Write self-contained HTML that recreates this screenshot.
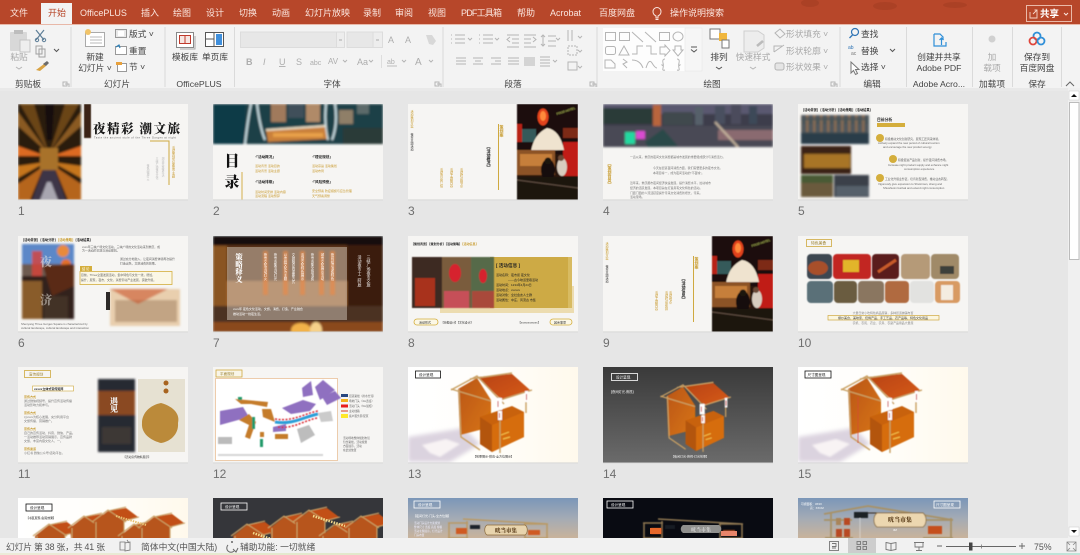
<!DOCTYPE html>
<html lang="zh-CN"><head><meta charset="utf-8"><title>幻灯片浏览</title>
<style>
html,body{margin:0;padding:0;background:#e6e6e6;width:1080px;height:555px;overflow:hidden}
svg{display:block;font-family:"Liberation Sans","Noto Sans CJK SC",sans-serif}
#root{filter:blur(.3px)}
.t{font-size:9px;fill:#fbe6df}
.r{font-size:8.7px;fill:#444}
.c{text-anchor:middle}
.g{fill:#a9a9a9}
.n{font-size:12px;fill:#6f6f6f}
.s{font-size:8.8px;fill:#555}
.ic{fill:none;stroke:#8a8a8a;stroke-width:1}
.ig{fill:none;stroke:#b5b5b5;stroke-width:1}
.v{writing-mode:vertical-rl}
.se{font-family:"Liberation Serif","Noto Serif CJK SC",serif;font-weight:900}
</style></head><body>
<svg id="root" width="1080" height="555" viewBox="0 0 1080 555" xmlns="http://www.w3.org/2000/svg">
<defs>
<filter id="b" x="-5%" y="-5%" width="110%" height="110%"><feGaussianBlur stdDeviation="1"/></filter>
<filter id="b2" x="-5%" y="-5%" width="110%" height="110%"><feGaussianBlur stdDeviation="0.5"/></filter>
<filter id="b3" x="-20%" y="-20%" width="140%" height="140%"><feGaussianBlur stdDeviation="2"/></filter>
<pattern id="lights" width="6" height="5" patternUnits="userSpaceOnUse"><rect width="6" height="5" fill="#5a3516"/><rect x="1" y="1" width="2.4" height="2" fill="#d98a30"/><rect x="4" y="3" width="1.2" height="1.2" fill="#f0bb66"/></pattern>
<pattern id="crowd" width="5" height="4" patternUnits="userSpaceOnUse"><rect width="5" height="4" fill="#6f4a30"/><circle cx="1.5" cy="1.5" r="1.2" fill="#3c2a20"/><circle cx="4" cy="3" r="1" fill="#b98a58"/></pattern>
<pattern id="city" width="7" height="14" patternUnits="userSpaceOnUse"><rect width="7" height="14" fill="#35505f"/><rect x="1" y="2" width="2.5" height="12" fill="#9a7a58"/><rect x="4.5" y="6" width="2" height="8" fill="#44586a"/></pattern>
<linearGradient id="wh" x1="0" x2="1" y1="0" y2="0"><stop offset="0" stop-color="#fff"/><stop offset=".5" stop-color="#fffefa"/><stop offset="1" stop-color="#fff9ec"/></linearGradient>
<linearGradient id="dk" x1="0" x2="0" y1="0" y2="1"><stop offset="0" stop-color="#3a3a3a"/><stop offset="1" stop-color="#6b6b6b"/></linearGradient>
<linearGradient id="sky" x1="0" x2="0" y1="0" y2="1"><stop offset="0" stop-color="#7b97b8"/><stop offset=".5" stop-color="#a3abb5"/><stop offset="1" stop-color="#c9b39b"/></linearGradient>
<linearGradient id="or" x1="0" x2="1" y1="0" y2="1"><stop offset="0" stop-color="#b9541a"/><stop offset="1" stop-color="#d8760f"/></linearGradient>
<linearGradient id="roof" x1="0" x2="1" y1="0" y2="1"><stop offset="0" stop-color="#b8440f"/><stop offset="1" stop-color="#d65a1a"/></linearGradient>
<linearGradient id="gr" x1="0" x2="1"><stop offset="0" stop-color="#ecebd8"/><stop offset=".4" stop-color="#dfe8c8"/><stop offset="1" stop-color="#bfe3d8"/></linearGradient>
<g id="booth">
<polygon points="50,22 69,11 83,33 83,60 52,68" fill="url(#or)"/>
<polygon points="69,10 104,7 122,23 94,33" fill="url(#roof)"/>
<polygon points="72,50 104,39 116,45 116,70 84,85 72,77" fill="#c8620f"/>
<polygon points="72,50 84,58 84,85 72,77" fill="#b35510"/>
<polygon points="84,58 116,45 116,70 84,85" fill="#d66d0f"/>
<path d="M43,23 69,9 96,37M62,12 104,6M92,33 124,23M51,22 53,70 72,83M92,30 92,86M118,25 118,46M43,22 83,34" fill="none" stroke="#c9a064" stroke-width="1.4"/>
<rect x="88" y="31" width="6" height="12" fill="#fff"/><rect x="90" y="44" width="4" height="9" fill="#fff"/><rect x="117" y="24" width="3" height="11" fill="#fff"/>
<path d="M90,34v6M91.5,46v5M118.5,27v6" stroke="#c22" stroke-width="1"/>
<path d="M93,68l8-3M95,72l7-2" stroke="#f1c04a" stroke-width="1.2"/>
</g>
<g id="mini">
<polygon points="2,16 16,5 32,13 32,36 4,36" fill="#b7541a"/>
<polygon points="16,5 34,2 46,11 32,15" fill="#c24f16"/>
<path d="M0,16 16,4 34,16M16,5 34,1M32,15 47,11M4,16 4,42M32,15 32,42" fill="none" stroke="#c9a064" stroke-width="1.1"/>
</g>
<g id="gate">
<path d="M55,21 140,26M40,25H60M40,40H60M41,25V44M59,23V44M116,26H140M116,40H140M117,26V44M139,26V44" fill="none" stroke="#b99a66" stroke-width="1.5"/>
<rect x="62" y="27" width="10" height="4" fill="#1f232b"/>
<rect x="48" y="30" width="11" height="6" fill="#cf5a22"/><rect x="120" y="32" width="12" height="5" fill="#cf5a22"/>
</g>
<g id="lantern">
<rect width="61" height="96" fill="#1a0f0c"/>
<rect x="0" y="50" width="61" height="46" fill="#2a1710"/>
<ellipse cx="26" cy="13" rx="5.5" ry="8.5" fill="#e2421a"/><ellipse cx="26" cy="12" rx="3" ry="5" fill="#ff8a3a"/>
<rect x="0" y="20" width="5" height="18" fill="#b82418"/><rect x="5" y="25" width="14" height="13" fill="#345a5a"/>
<path d="M46,24h15v10H46z" fill="#7d2a18"/>
<rect x="46" y="38" width="15" height="34" fill="#c01f14"/>
<path d="M14,47 Q17,30 30,24 Q43,26 47,46Z" fill="#efe3cf"/>
<rect x="0" y="46" width="38" height="25" fill="#8c5226"/><rect x="3" y="50" width="32" height="12" fill="#c67f3a"/>
<ellipse cx="31" cy="66" rx="7" ry="11" fill="#120b09"/><circle cx="31" cy="57" r="3.5" fill="#1c1310"/>
<ellipse cx="45" cy="63" rx="5" ry="9" fill="#d8cdbf"/><circle cx="44" cy="54" r="3" fill="#6a4a36"/>
<rect x="0" y="73" width="61" height="23" fill="#1f1410"/><path d="M0,76 61,84" stroke="#5a4a3d" stroke-width="1.2"/>
<text x="40" y="11" font-size="3" fill="#d6e86a" transform="rotate(-18 40 11)">FOOD HOTEL</text>
</g>
</defs>
<rect width="1080" height="555" fill="#e6e6e6"/>

<!-- SLIDES -->
<!-- 1 -->
<svg x="18" y="104" width="170" height="96" viewBox="0 0 170 96"><rect width="170" height="96" fill="#f6f5f3"/>
<g filter="url(#b)"><rect width="63" height="96" fill="#2a1a10"/>
<polygon points="31,50 2,0 16,0" fill="#6a4418"/><polygon points="31,50 61,0 47,0" fill="#6a4418"/>
<polygon points="31,50 0,8 0,22" fill="#8a5a20"/><polygon points="31,50 63,8 63,22" fill="#8a5a20"/>
<polygon points="28,52 0,42 0,52" fill="#dd6a20"/><polygon points="34,52 63,42 63,52" fill="#dd6a20"/>
<polygon points="28,58 0,62 0,74" fill="#c6761f"/><polygon points="34,58 63,62 63,74" fill="#c6761f"/>
<polygon points="26,62 0,80 0,96 12,96" fill="#b5651a"/><polygon points="36,62 63,80 63,96 50,96" fill="#b5651a"/>
<polygon points="25,66 37,66 48,96 14,96" fill="#3d3546"/><polygon points="29,78 33,78 40,96 22,96" fill="#a8a6b0"/>
<rect x="22" y="44" width="18" height="22" fill="#a8722c"/>
<polygon points="27,0 36,0 34,36 29,36" fill="#151010"/></g>
<rect x="66" width="7" height="34" fill="#3a2415" filter="url(#b2)"/>
<text x="75" y="29" class="se" font-size="12.5" fill="#181818" textLength="87" lengthAdjust="spacing">夜精彩 潮文旅</text>
<text x="76" y="34.5" font-size="2.7" fill="#666" textLength="82">Taste the ancient style of the Three Gorges at night</text>
<path d="M132,37H151V81" fill="none" stroke="#cfa93f" stroke-width="1"/>
<text x="155" y="42" font-size="3.2" fill="#c99a2e" class="v">活动策划方案夜市主题</text>
<text x="130" y="60" font-size="2.8" fill="#bbb" class="v">夜色阑珊灯火</text><text x="139" y="53" font-size="2.8" fill="#bbb" class="v">三峡广场夜市文化</text><text x="145" y="53" font-size="2.8" fill="#bbb" class="v">潮流文旅夜生活</text>
</svg>
<!-- 2 -->
<svg x="213" y="104" width="170" height="96" viewBox="0 0 170 96"><rect width="170" height="96" fill="#f6f5f3"/>
<g filter="url(#b)"><rect width="170" height="40" fill="#1b3f47"/><rect x="0" width="32" height="40" fill="#0f3a46"/>
<rect x="58" width="15" height="18" fill="#a07a5c"/><rect x="93" width="14" height="18" fill="#b08a68"/><rect x="75" width="16" height="14" fill="#41505a"/><rect x="126" y="6" width="14" height="14" fill="#8f7f68"/><rect x="144" y="0" width="12" height="10" fill="#5b6a6a"/>
<rect x="130" y="24" width="40" height="16" fill="#2a3a38"/>
<path d="M32,40 Q35,14 38,0M44,0 Q47,24 52,36M113,0 Q111,20 115,36M122,0 Q125,20 119,36" stroke="#d7ebf0" stroke-width="1.8" fill="none"/>
<polygon points="53,26 112,22 114,35 55,38" fill="#c9803a"/><polygon points="53,25 112,21 112,23 53,27" fill="#ece0c8"/><rect x="60" y="29" width="50" height="4" fill="#e8a04a"/></g>
<text x="19" y="62" class="se" font-size="15" fill="#111" text-anchor="middle">目</text><text x="19" y="83" class="se" font-size="15" fill="#111" text-anchor="middle">录</text>
<rect x="28.5" y="68" width="1" height="28" fill="#d4ae4b"/>
<g font-size="3.6" fill="#222" font-weight="700"><text x="42" y="54">·「活动概况」</text><text x="99" y="54">·「理论规划」</text><text x="42" y="79">·「活动排期」</text><text x="99" y="79">·「风险预案」</text></g>
<g font-size="3" fill="#c99a2e"><text x="42" y="63">活动背景 活动目的</text><text x="42" y="68">活动背景 活动主题</text><text x="99" y="63">活动宗旨 活动策划</text><text x="99" y="68">活动布局</text><text x="42" y="89">活动时间安排 活动内容</text><text x="42" y="93">活动流程 活动预算</text><text x="99" y="88">安全预案 防疫措施与应急管理</text><text x="99" y="93">天气预案调整</text></g>
</svg>
<!-- 3 -->
<svg x="408" y="104" width="170" height="96" viewBox="0 0 170 96"><rect width="170" height="96" fill="#f6f5f3"/>
<use href="#lantern" x="109" filter="url(#b2)"/>
<rect x="90" y="20" width="1" height="66" fill="#cfa93f"/>
<text x="94" y="21" font-size="4" fill="#c79a2b" class="v" font-weight="700">策划案</text>
<text x="81" y="41" font-size="4" fill="#222" class="v" font-weight="700">【活动概况】</text>
<text x="4" y="6" font-size="3" fill="#c79a2b" class="v">活动策划方案</text><text x="4" y="29" font-size="3" fill="#333" class="v">夜市主题活动</text>
<g font-size="3.2" fill="#c99a2e" class="v"><text x="33" y="64">活动背景介绍</text><text x="43" y="64">活动主题内容</text><text x="53" y="64">活动时间地点</text></g>
</svg>
<!-- 4 -->
<svg x="603" y="104" width="170" height="96" viewBox="0 0 170 96"><rect width="170" height="96" fill="#f6f5f3"/>
<g filter="url(#b)"><rect width="170" height="43" fill="#3c3d4c"/><rect width="170" height="10" fill="#5a5870"/><rect x="0" y="4" width="52" height="16" fill="#2c3a38"/><rect x="50" y="1" width="8" height="21" fill="#b8653c"/><rect x="60" y="8" width="30" height="13" fill="#3f4a4e"/><rect x="92" y="3" width="8" height="18" fill="#56606a"/><rect x="112" y="2" width="10" height="18" fill="#48505e"/><rect x="128" y="0" width="10" height="20" fill="#4c4c5c"/><rect x="146" y="2" width="8" height="18" fill="#3e4a58"/><rect y="22" width="170" height="21" fill="#4a4855"/><rect x="115" y="26" width="55" height="10" fill="#8a6a70"/><rect x="22" y="28" width="10" height="12" fill="#22d8a0"/><rect x="33" y="27" width="9" height="8" fill="#d94cd0"/><polygon points="42,38 60,25 75,42 45,43" fill="#2a4a4a"/><path d="M112,18 135,43" stroke="#c9b8a0" stroke-width="2"/></g>
<text x="7" y="58" font-size="4" fill="#c79a2b" class="v" font-weight="700">【策划背景】</text>
<g font-size="2.9" fill="#777"><text x="27" y="54">一直以来，重庆的夜间文化消费都是城市发展的重要组成部分与消费活力。</text><text x="50" y="65">今天在街道夜间消费方面，我们需要更多的夜市文化。</text><text x="50" y="70">本项目将一，成为夜间活动的"不夜城"。</text><text x="27" y="80">近年来，重庆都市夜间经济快速发展，提升消费水平，拉动城市</text><text x="27" y="85">经济的活跃发展，本项目旨在打造具有文化特色的活动。</text><text x="27" y="90">门面门面的人流活跃度提升带来文化消费新增长，带来。</text><text x="27" y="94">活动现场。</text></g>
</svg>
<!-- 5 -->
<svg x="798" y="104" width="170" height="96" viewBox="0 0 170 96"><rect width="170" height="96" fill="#f6f5f3"/>
<text x="3" y="7" font-size="3.2" fill="#222" font-weight="700">【活动背景】【活动分析】【活动策略】【活动结果】</text>
<g filter="url(#b)"><rect x="3" y="11" width="68" height="18" fill="#6a5a50"/><rect x="3" y="11" width="68" height="18" fill="url(#city)" opacity=".6"/><rect x="3" y="29" width="68" height="11" fill="#2a3d4a"/><rect x="3" y="42" width="50" height="28" fill="#3a2414"/><rect x="6" y="50" width="46" height="14" fill="#a87428"/><rect x="3" y="71" width="32" height="22" fill="#4a5a34"/><rect x="3" y="79" width="32" height="14" fill="#6a5a3c"/><rect x="36" y="71" width="35" height="22" fill="#3b4048"/><rect x="38" y="82" width="33" height="10" fill="#56606a"/></g>
<text x="79" y="17" font-size="3.8" fill="#222" font-weight="700">目前分析</text>
<rect x="79" y="19" width="28" height="4" fill="#d4ae3c"/>
<circle cx="82" cy="34" r="4" fill="#d4ae3c"/><circle cx="95" cy="55" r="4" fill="#d4ae3c"/><circle cx="82" cy="74" r="4" fill="#d4ae3c"/>
<g font-size="2.8" fill="#666"><text x="87" y="36">积极推动文化创新研究，展现工匠风采体验。</text><text x="80" y="40">Actively expand the new period of cultural tourism</text><text x="85" y="44">and encourage the new product energy</text><text x="100" y="57">积极促进产品创新，提升夜间消费市场。</text><text x="90" y="62">Increase night product supply and enhance night</text><text x="106" y="66">consumption experience</text><text x="87" y="76">工业化升级业务链，培育新型消费，推动业态转型。</text><text x="80" y="81">Vigorously give expansion to Shuiximan, sheng and</text><text x="85" y="85">Shiushusin festival and extend night consumption</text></g>
</svg>
<!-- 6 -->
<svg x="18" y="236" width="170" height="96" viewBox="0 0 170 96"><rect width="170" height="96" fill="#f6f5f3"/>
<text x="3" y="5" font-size="3.2" fill="#222" font-weight="700">【活动背景】【活动分析】<tspan fill="#c79a2b">【活动策略】</tspan>【活动结果】</text>
<g filter="url(#b)"><rect x="4" y="8" width="52" height="75" fill="#6d5a50"/><rect x="4" y="8" width="52" height="20" fill="#5b88c8"/><rect x="4" y="40" width="52" height="43" fill="#30241f"/><circle cx="45" cy="15" r="6" fill="#e98a3a"/><circle cx="48" cy="28" r="5" fill="#e2702a"/><rect x="14" y="15" width="10" height="25" fill="#d9423a" opacity=".8"/><rect x="4" y="45" width="20" height="38" fill="#a06a30" opacity=".8"/><polygon points="25,30 56,28 56,50 34,60" fill="#5a2a18"/><rect x="26" y="60" width="24" height="23" fill="#433028"/>
<rect x="92" y="53" width="70" height="37" fill="#e9cfae"/><rect x="97" y="64" width="62" height="22" fill="#c2a484"/><polygon points="92,53 150,53 120,68" fill="#c84a20" opacity=".55"/></g>
<text x="22" y="30" font-size="12" fill="#f5f1ea" opacity=".5" class="se">夜</text><text x="22" y="68" font-size="12" fill="#e8e4de" opacity=".5" class="se">济</text>
<g font-size="2.9" fill="#666"><text x="64" y="12">xxxx年三峡广场文化活动，三峡广场的文化活动来到重庆，成</text><text x="64" y="15.5">为一活动的主题与活动规划。</text><text x="102" y="24">通过充分地融入，让夜间消费体验再次提升</text><text x="102" y="28.5">打造出色，文旅消费的效果。</text></g>
<rect x="62" y="30" width="12" height="5" fill="#d4ae3c"/><text x="64" y="34" font-size="3.2" fill="#fff">结 论</text>
<rect x="62" y="35.5" width="92" height="13" fill="#fbf7e6" stroke="#d4ae3c" stroke-width=".8"/>
<g font-size="2.9" fill="#666"><text x="63" y="40">目前，Three全面发展活动，集中特色与文化一线，增加，</text><text x="63" y="45">提升，展现，夜市，文化，消费带动产业发展，突破升级。</text><text x="3" y="89">Shenyang Three Gorges Square is characterized by</text><text x="3" y="93">cultural landscape, cultural landscape and interaction</text></g>
<rect x="88" y="56" width="4" height="18" fill="#2d2a28"/>
</svg>
<!-- 7 -->
<svg x="213" y="236" width="170" height="96" viewBox="0 0 170 96">
<g filter="url(#b)"><rect width="170" height="96" fill="#5a3016"/><rect width="170" height="9" fill="#120d0a"/><rect x="0" y="10" width="14" height="86" fill="#8a5420"/><rect x="134" y="9" width="36" height="70" fill="#3a1d10"/><rect x="14" y="45" width="120" height="30" fill="#a86a34"/><rect y="70" x="0" width="170" height="18" fill="#4c3324"/><rect y="86" width="170" height="10" fill="#8a4a1c"/><ellipse cx="88" cy="94" rx="10" ry="7" fill="#f2b24a"/><ellipse cx="103" cy="94" rx="6" ry="8" fill="#f6d18a"/></g>
<rect x="14" y="11" width="120" height="73" fill="#c8bcae" opacity=".55"/>
<g filter="url(#b)" opacity=".7"><rect x="50" y="15" width="5" height="44" fill="#e88a4a"/><rect x="70" y="15" width="5" height="44" fill="#e88a4a"/><rect x="87" y="15" width="5" height="44" fill="#e88a4a"/><rect x="106" y="15" width="5" height="44" fill="#e88a4a"/><rect x="117" y="15" width="5" height="44" fill="#e88a4a"/></g>
<g fill="#fff"><text x="26" y="17" font-size="7.5" class="se v">策略释义</text>
<g font-size="3.400" class="v" opacity=".95"><text x="52" y="17">夜市文化活动灯火</text><text x="62" y="17">夜市市集活动灯光</text><text x="72" y="17">以传统文化为主题</text><text x="80" y="17">文旅融合的重要方式</text><text x="89" y="17">活动文化特色展示</text><text x="99" y="17">夜市市集文旅消费</text><text x="109" y="17">城市文化展示活动</text><text x="119" y="17">夜间经济消费特色</text><text x="147" y="19" font-size="4">活动夜市十二时辰</text><text x="156" y="19" font-size="4">三峡广场夜市文旅</text></g>
<text x="20" y="74" font-size="3">xxxx年 夜色文化活动，文旅，消费，打造，产业融合</text><text x="20" y="79" font-size="3">推动活动一线夜生活。</text></g>
</svg>
<!-- 8 -->
<svg x="408" y="236" width="170" height="96" viewBox="0 0 170 96"><rect width="170" height="96" fill="#f6f5f3"/>
<text x="3" y="9" font-size="3" fill="#222" font-weight="700">【策划背景】【策划分析】【活动策略】<tspan fill="#c79a2b">【活动信息】</tspan></text>
<rect x="32" y="50" width="134" height="27" fill="#ecdcb0"/>
<rect x="82" y="21" width="80" height="51" fill="#cdaa45"/><rect x="160" y="21" width="4" height="51" fill="#d8bb62"/>
<g filter="url(#b2)"><rect x="4" y="21" width="82" height="51" fill="#4a3528"/><rect x="4" y="21" width="30" height="51" fill="#3e2b24"/><rect x="7" y="42" width="20" height="28" fill="#a8331f"/><rect x="34" y="21" width="29" height="51" fill="#7a5c3c"/><ellipse cx="47" cy="37" rx="6" ry="9" fill="#d6232e"/><rect x="36" y="55" width="25" height="17" fill="#c64f58"/><rect x="63" y="21" width="23" height="51" fill="#566a48"/><ellipse cx="75" cy="40" rx="4" ry="7" fill="#d6232e"/><rect x="64" y="55" width="22" height="17" fill="#a94a3a"/></g>
<text x="88" y="31" font-size="4.6" fill="#222" font-weight="700">[ 活动信息 ]</text>
<g font-size="3" fill="#222"><text x="88" y="40">活动名称：夜市街 夜文化</text><text x="100" y="45">——古今味道里巷活动</text><text x="88" y="50">活动时间：1234年4月24日</text><text x="88" y="55">活动地点：xxxxxx</text><text x="88" y="60">活动对象：全社会友人士群</text><text x="88" y="65">活动属性：中庄、风流古 市集</text></g>
<rect x="6" y="83" width="24" height="6" rx="3" fill="#fbf7e6" stroke="#d4ae3c" stroke-width=".8"/><text x="11" y="87.5" font-size="3" fill="#333">活动形式</text>
<text x="33" y="87.5" font-size="2.8" fill="#333">【海报设计】【文化设计】</text><text x="110" y="87.5" font-size="2.8" fill="#333">【xxxxxxxxxxxx】</text>
<rect x="142" y="83" width="22" height="6" rx="3" fill="#fbf7e6" stroke="#d4ae3c" stroke-width=".8"/><text x="146" y="87.5" font-size="3" fill="#333">其余事项</text>
</svg>
<!-- 9 -->
<svg x="603" y="236" width="170" height="96" viewBox="0 0 170 96"><rect width="170" height="96" fill="#f6f5f3"/>
<use href="#lantern" x="109" filter="url(#b2)"/>
<rect x="90" y="20" width="1" height="66" fill="#cfa93f"/>
<text x="94" y="21" font-size="4" fill="#c79a2b" class="v" font-weight="700">策划案</text>
<text x="81" y="41" font-size="4" fill="#222" class="v" font-weight="700">【活动信息】</text>
<text x="4" y="6" font-size="3" fill="#c79a2b" class="v">活动策划方案</text><text x="4" y="29" font-size="3" fill="#333" class="v">夜市主题活动</text>
<g font-size="3.2" fill="#c99a2e" class="v"><text x="53" y="55">活动主题内容</text><text x="63" y="55">活动时间安排</text><text x="67" y="55">活动地点</text></g>
</svg>
<!-- 10 -->
<svg x="798" y="236" width="170" height="96" viewBox="0 0 170 96"><rect width="170" height="96" fill="#f6f5f3"/>
<rect x="8.500" y="3.500" width="25" height="7" fill="none" stroke="#cfa93f" stroke-width=".8"/><text x="13" y="8.500" font-size="3.800" fill="#9a8030">特色美食</text>
<g filter="url(#b2)"><rect x="9" y="18" width="25" height="25" rx="4" fill="#3d4651"/><ellipse cx="20" cy="32" rx="10" ry="7" fill="#a8502a"/><rect x="35" y="18" width="38" height="25" rx="4" fill="#c22522"/><rect x="45" y="24" width="16" height="12" fill="#e2b52a"/><rect x="74" y="18" width="27" height="25" rx="4" fill="#5a1f1c"/><path d="M80,36 98,24" stroke="#c85a2a" stroke-width="3"/><rect x="103" y="18" width="29" height="25" rx="4" fill="#b59a78"/><rect x="133" y="18" width="28" height="25" rx="4" fill="#a08a68"/><rect x="142" y="30" width="14" height="8" fill="#3c3f3a"/>
<rect x="9" y="45" width="26" height="22" rx="4" fill="#5a7078"/><rect x="36" y="45" width="23" height="22" rx="4" fill="#6a5c40"/><rect x="60" y="45" width="26" height="22" rx="4" fill="#8a7660"/><rect x="87" y="45" width="24" height="22" rx="4" fill="#b06a40"/><rect x="112" y="45" width="24" height="22" rx="4" fill="#e2e2e0"/><rect x="137" y="45" width="25" height="22" rx="4" fill="#d89a62"/><rect x="143" y="49" width="12" height="15" fill="#f4ece0"/></g>
<text x="85" y="78" font-size="2.900" fill="#888" text-anchor="middle">大量日常小吃特色商品展销，多种街道摊铺布置</text>
<rect x="30" y="79.500" width="111" height="4.500" fill="#fbf6df" stroke="#cfa93f" stroke-width=".7"/>
<text x="85" y="83" font-size="3" fill="#444" text-anchor="middle">爆炒美食、美味家、烧烤产品、手工艺品、农产品等、特色文化用品</text>
<text x="85" y="88" font-size="2.900" fill="#888" text-anchor="middle">农机、农民、农业、农具、农副产品用品大量展</text>
</svg>
<!-- 11 -->
<svg x="18" y="367" width="170" height="96" viewBox="0 0 170 96"><rect width="170" height="96" fill="#f6f5f3"/>
<rect x="6.500" y="3.500" width="26" height="7" fill="none" stroke="#cfa93f" stroke-width=".8"/><text x="11" y="8.500" font-size="3.600" fill="#9a8030">宣传规划</text>
<rect x="14.500" y="19" width="41" height="5" fill="#fff" stroke="#cfa93f" stroke-width=".6"/><text x="16" y="23" font-size="3" fill="#222" font-weight="700">xxxxx立体式宣传矩阵</text>
<g font-size="3" fill="#777"><text x="6" y="31" fill="#c79a2b" font-weight="700">宣传方式</text><text x="6" y="35">通过微信视频号，提升宣传活动传播</text><text x="6" y="39">活动影响力和参与。</text>
<text x="6" y="47" fill="#c79a2b" font-weight="700">宣传方式</text><text x="6" y="51">以xxxx为核心发展，充分利用平台</text><text x="6" y="55">文旅传播、营销推广。</text>
<text x="6" y="63" fill="#c79a2b" font-weight="700">宣传方式</text><text x="6" y="67">自己的宣传活动，抖音、微信、产品。</text><text x="6" y="71">一活动推荐活动营销展示，宣传品牌</text><text x="6" y="75">文旅，丰富内容文化人，一。</text>
<text x="6" y="83" fill="#c79a2b" font-weight="700">宣传渠道</text><text x="6" y="87">小红书 微信公众号/活动平台。</text></g>
<g filter="url(#b)"><rect x="80" y="12" width="37" height="73" fill="#272c30"/><rect x="80" y="24" width="37" height="24" fill="#8a4a24"/><rect x="84" y="60" width="29" height="17" fill="#3e3835"/></g>
<text x="96" y="30" font-size="8" fill="#eee" class="se v">遇见</text>
<rect x="120" y="12" width="47" height="73" fill="#e6e1d2"/><path d="M143,36 c14,4 19,12 17,20 c1,12-9,19-17,20 c-8,-2-20,-8-19,-20 c0,-10 8,-18 19,-20z" fill="#bb8a3a"/><circle cx="148" cy="16" r="2.500" fill="#a8641f"/><circle cx="148" cy="24" r="2.500" fill="#a8641f"/>
<text x="105" y="91" font-size="2.800" fill="#333">【活动宣传物料展示】</text>
</svg>
<!-- 12 -->
<svg x="213" y="367" width="170" height="96" viewBox="0 0 170 96"><rect width="170" height="96" fill="#f6f5f3"/>
<rect x="2.500" y="11.500" width="122" height="82" fill="#fff" stroke="#ecc7a4" stroke-width=".9"/>
<rect x="3" y="3" width="26" height="7" fill="#f8f5e8" stroke="#cfa93f" stroke-width=".8"/><text x="7" y="8" font-size="3.600" fill="#9a8030">平面规划</text>
<g filter="url(#b2)"><polygon points="89,21 98,14 100,28 90,30" fill="#8f6fc0"/><polygon points="102,20 110,13 122,23 107,33" fill="#8f6fc0"/><polygon points="109,30 122,24 128,31 114,38" fill="#8f6fc0"/><polygon points="69,41 90,33 103,37 97,44 78,47" fill="#8f6fc0"/><polygon points="7,44 30,40 36,50 7,58" fill="#8f6fc0"/><polygon points="60,60 73,57 73,64 60,65" fill="#8f6fc0"/>
<polygon points="22,32 55,35 54,40 38,37 28,37" fill="#c57b2c"/><polygon points="26,53 36,47 43,55 37,72 32,70 36,58" fill="#c57b2c"/><polygon points="49,42 58,42 62,55 50,50" fill="#c57b2c"/><rect x="62" y="67" width="13" height="5" fill="#c57b2c"/><rect x="47" y="65" width="4" height="5" fill="#c57b2c"/>
<path d="M62,55 C80,58 90,50 105,47" stroke="#2a9fd8" stroke-width="3" fill="none"/><path d="M62,52 C80,55 90,47 105,44M65,60 C80,62 90,54 104,51" stroke="#d8202a" stroke-width="1.500" fill="none" stroke-dasharray="2 1.500"/>
<polygon points="105,46 118,44 120,54 108,55" fill="#cbcbcb"/><polygon points="84,62 96,58 102,68 88,76" fill="#bdbdbd"/><rect x="5" y="70" width="14" height="7" fill="#bbb"/><path d="M5,88 H110" stroke="#d5d5d5" stroke-width="2"/>
<rect x="39" y="50" width="3" height="12" fill="#239a6a"/><rect x="47" y="72" width="3" height="8" fill="#239a6a"/><rect x="25" y="30" width="4" height="3" fill="#239a6a"/></g>
<rect x="128" y="27" width="7" height="3" fill="#27467f"/><rect x="128" y="32" width="7" height="3" fill="#f2b01e"/><rect x="128" y="37.500" width="7" height="3" fill="#e81d1d"/><path d="M128,44h7" stroke="#d83a1d"/><rect x="128" y="47" width="7" height="4" fill="#ffe82a"/>
<g font-size="2.700" fill="#666"><text x="136" y="30">街道路线（用水分流）</text><text x="136" y="35">场地门头（3m宽度）</text><text x="136" y="40">活动门头（5m展柜）</text><text x="136" y="45">主动线路</text><text x="136" y="50">客户服务区/配区</text><text x="130" y="72">活动场地整体规划布局</text><text x="130" y="76">包含路线，活动规划</text><text x="130" y="80">方面展示，活动</text><text x="130" y="84">在此处放置</text></g>
</svg>
<!-- 13 -->
<svg x="408" y="367" width="170" height="96" viewBox="0 0 170 96"><rect width="170" height="96" fill="url(#wh)"/>
<polygon points="0,70 56,61 72,77 42,95 0,95" fill="#dbd3df" filter="url(#b3)"/><polygon points="14,78 38,72 52,77 32,90 22,86" fill="#f8f3f4" filter="url(#b)"/>
<use href="#booth" filter="url(#b2)"/>
<rect x="7.500" y="4" width="25" height="7" fill="#fff" stroke="#111" stroke-width=".8"/><text x="11" y="9" font-size="3.600" fill="#111">设计呈现</text>
<text x="65" y="90.500" font-size="3" fill="#333">【效果展示-横向-全方位展示】</text>
</svg>
<!-- 14 -->
<svg x="603" y="367" width="170" height="96" viewBox="0 0 170 96"><rect width="170" height="96" fill="url(#dk)"/>
<g transform="translate(20,10) scale(.87)" filter="url(#b2)"><use href="#booth"/></g>
<rect x="8.500" y="6.500" width="26" height="7" fill="none" stroke="#fff" stroke-width=".8"/><text x="13" y="11.500" font-size="3.600" fill="#fff">设计呈现</text>
<text x="6" y="26" font-size="3.200" fill="#eee">【夜间灯光-俯视】</text>
<text x="68" y="90.500" font-size="3" fill="#eee">【夜间灯光-俯视-灯光效果】</text>
</svg>
<!-- 15 -->
<svg x="798" y="367" width="170" height="96" viewBox="0 0 170 96"><rect width="170" height="96" fill="url(#wh)"/>
<polygon points="0,70 56,61 72,77 42,95 0,95" fill="#dbd3df" filter="url(#b3)"/><polygon points="14,78 38,72 52,77 32,90 22,86" fill="#f8f3f4" filter="url(#b)"/>
<use href="#booth" filter="url(#b2)"/><path d="M60,30V76" stroke="#d8453a" stroke-width=".6"/>
<rect x="7" y="4" width="26" height="7" fill="#fff" stroke="#111" stroke-width=".8"/><text x="9.500" y="9" font-size="3.600" fill="#111">尺寸图呈现</text>
</svg>
<!-- 16 -->
<svg x="18" y="498" width="170" height="40" viewBox="0 0 170 40"><rect width="170" height="40" fill="url(#wh)"/>
<g filter="url(#b2)"><use href="#mini" x="15" y="22"/><use href="#mini" x="50" y="14"/><use href="#mini" x="74" y="8"/><use href="#mini" x="100" y="22"/><use href="#mini" x="120" y="14"/></g>
<path d="M98,18 128,27" stroke="#e8c070" stroke-width="2" stroke-dasharray="1.500 1"/>
<rect x="8" y="6" width="26" height="7" fill="#fff" stroke="#111" stroke-width=".8"/><text x="12" y="11" font-size="3.600" fill="#111">设计呈现</text>
<text x="8" y="21" font-size="2.900" fill="#222">【书区展现-鱼尾效果】</text>
</svg>
<!-- 17 -->
<svg x="213" y="498" width="170" height="40" viewBox="0 0 170 40"><rect width="170" height="40" fill="#35363a"/>
<g filter="url(#b2)"><use href="#mini" x="18" y="22"/><use href="#mini" x="55" y="14"/><use href="#mini" x="80" y="8"/><use href="#mini" x="106" y="22"/><use href="#mini" x="132" y="14"/></g>
<path d="M100,18 132,28M40,35 70,45" stroke="#f3d88a" stroke-width="2.500" stroke-dasharray="1.500 1.200"/>
<rect x="8" y="5" width="26" height="7" fill="none" stroke="#fff" stroke-width=".8"/><text x="12" y="10" font-size="3.600" fill="#fff">设计呈现</text>
</svg>
<!-- 18 -->
<svg x="408" y="498" width="170" height="40" viewBox="0 0 170 40"><rect width="170" height="40" fill="url(#sky)"/>
<rect x="6" y="3" width="26" height="7" fill="none" stroke="#fff" stroke-width=".8"/><text x="10" y="8" font-size="3.600" fill="#fff">设计呈现</text>
<text x="5" y="19" font-size="3" fill="#fff">【夜间灯光-门头-全方位展】</text>
<g font-size="2.600" fill="#eef"><text x="6" y="26">活动门头设计方案规划</text><text x="6" y="30">整体尺寸 宽度 高度 规格</text><text x="6" y="34">活动主题展示，灯光设计</text><text x="6" y="38">门头布置</text></g>
<use href="#gate" filter="url(#b2)"/>
<path d="M79,27h38c3,2,3,8,0,10h-38c-3,-2,-3,-8,0,-10z" fill="#e8d4ad" stroke="#8a6a3a" stroke-width=".7"/>
<text x="98" y="34.500" class="se" font-size="5.500" fill="#5a3d1a" text-anchor="middle">咣当市集</text>
</svg>
<!-- 19 -->
<svg x="603" y="498" width="170" height="40" viewBox="0 0 170 40"><rect width="170" height="40" fill="#090b12"/>
<rect x="4" y="3" width="26" height="7" fill="none" stroke="#fff" stroke-width=".8"/><text x="8" y="8" font-size="3.600" fill="#fff">设计呈现</text>
<g opacity=".75"><use href="#gate" filter="url(#b2)"/></g>
<rect x="47" y="30" width="11" height="6" fill="#e8682a"/><rect x="118" y="33" width="16" height="5" fill="#e8856a"/>
<path d="M80,27h36c3,2,3,6,0,8h-36c-3,-2,-3,-6,0,-8z" fill="#8f8f8d"/>
<text x="98" y="33.500" class="se" font-size="5" fill="#ccc" text-anchor="middle">咣当市集</text>
</svg>
<!-- 20 -->
<svg x="798" y="498" width="170" height="40" viewBox="0 0 170 40"><rect width="170" height="40" fill="url(#sky)"/>
<text x="3" y="7" font-size="2.800" fill="#fff">可视面积：3X3X</text><text x="12" y="11" font-size="2.800" fill="#fff">高：XXCM</text>
<rect x="136" y="3" width="26" height="7" fill="none" stroke="#fff" stroke-width=".8"/><text x="138" y="8" font-size="3.600" fill="#fff">尺寸图呈现</text>
<g filter="url(#b2)"><path d="M26,16 70,8 155,22M33,15V44M153,20V44M27,40H55M125,40H155M26,22H54M125,22H155" fill="none" stroke="#a89268" stroke-width="1.800"/><path d="M60,15H125" stroke="#332a20" stroke-width="1"/><rect x="56" y="14" width="14" height="6" fill="#1c2028"/><path d="M79,15h46c4,3,4,11,0,14h-46c-4-3-4-11,0-14z" fill="#ecd7b0" stroke="#8a6a3a" stroke-width=".8"/><rect x="38" y="20" width="5" height="7" fill="#a9855a"/><rect x="46" y="20" width="6" height="7" fill="#b84a22"/><rect x="38" y="31" width="6" height="8" fill="#b84a22"/><rect x="46" y="31" width="6" height="8" fill="#b84a22"/><rect x="130" y="28" width="14" height="8" fill="#c54f1f"/><path d="M62,20V44" stroke="#eee" stroke-width=".5"/></g>
<text x="102" y="24" class="se" font-size="6" fill="#5a3d1a" text-anchor="middle">咣当市集</text>
<text x="95" y="33" font-size="2.800" fill="#fff">3M</text>
</svg>
<g fill="#d2d2d2"><rect x="18" y="199.500" width="170" height=".8"/><rect x="213" y="199.500" width="170" height=".8"/><rect x="408" y="199.500" width="170" height=".8"/><rect x="603" y="199.500" width="170" height=".8"/><rect x="798" y="199.500" width="170" height=".8"/><rect x="18" y="331.500" width="170" height=".8"/><rect x="213" y="331.500" width="170" height=".8"/><rect x="408" y="331.500" width="170" height=".8"/><rect x="603" y="331.500" width="170" height=".8"/><rect x="798" y="331.500" width="170" height=".8"/><rect x="18" y="462.500" width="170" height=".8"/><rect x="213" y="462.500" width="170" height=".8"/><rect x="408" y="462.500" width="170" height=".8"/><rect x="603" y="462.500" width="170" height=".8"/><rect x="798" y="462.500" width="170" height=".8"/></g>
<!-- numbers -->
<g class="n"><text x="18" y="215">1</text><text x="213" y="215">2</text><text x="408" y="215">3</text><text x="603" y="215">4</text><text x="798" y="215">5</text>
<text x="18" y="347">6</text><text x="213" y="347">7</text><text x="408" y="347">8</text><text x="603" y="347">9</text><text x="798" y="347">10</text>
<text x="18" y="478">11</text><text x="213" y="478">12</text><text x="408" y="478">13</text><text x="603" y="478">14</text><text x="798" y="478">15</text></g>

<!-- scrollbar -->
<rect x="1068" y="88" width="12" height="450" fill="#f0f0f0"/>
<rect x="1069" y="91" width="10" height="9" fill="#fff" stroke="#c8c8c8" stroke-width=".5"/><path d="M1071,97h6l-3,-3z" fill="#111"/>
<rect x="1069.500" y="102.500" width="9.500" height="157" fill="#fff" stroke="#bcbcbc"/>
<rect x="1069" y="527" width="10" height="9" fill="#fff" stroke="#c8c8c8" stroke-width=".5"/><path d="M1071,530h6l-3,3z" fill="#111"/>

<!-- TITLE BAR -->
<rect width="1080" height="24" fill="#b7472a"/>
<rect y="24" width="1080" height="1" fill="#e8b8a8"/>
<g fill="#a73f24" opacity=".7"><ellipse cx="810" cy="3" rx="9" ry="4"/><ellipse cx="885" cy="6" rx="12" ry="4"/><ellipse cx="955" cy="5" rx="12" ry="3"/></g>
<path d="M41,24V3H72V24Z" fill="#f3f3f3"/>
<g class="t"><text x="10" y="16">文件</text><text x="48" y="16" style="fill:#b7472a">开始</text><text x="80" y="16">OfficePLUS</text><text x="141" y="16">插入</text><text x="173" y="16">绘图</text><text x="206" y="16">设计</text><text x="239" y="16">切换</text><text x="272" y="16">动画</text><text x="305" y="16">幻灯片放映</text><text x="363" y="16">录制</text><text x="395" y="16">审阅</text><text x="428" y="16">视图</text><text x="461" y="16" textLength="41">PDF工具箱</text><text x="517" y="16">帮助</text><text x="550" y="16">Acrobat</text><text x="599" y="16">百度网盘</text><text x="670" y="16">操作说明搜索</text></g>
<path d="M656,18v-2c-2,-1 -3,-3 -3,-4.500a4,4 0 0 1 8,0c0,1.500 -1,3.500 -3,4.500v2zM655.500,19.500h3" fill="none" stroke="#fbe6df"/>
<rect x="1026.500" y="5.500" width="45" height="16" fill="none" stroke="#eab9a8"/>
<path d="M1030,12v6h7v-6M1033,14l4,-4m-2.500,0h2.500v2.500" fill="none" stroke="#f6d5c8" stroke-width=".9"/>
<text x="1040" y="17" font-size="9.500" font-weight="700" fill="#fff">共享</text><path d="M1064,13l2,2 2,-2" fill="none" stroke="#fbe6df"/>

<!-- RIBBON -->
<rect y="25" width="1080" height="63" fill="#f3f3f3"/>
<rect y="88" width="1068" height="3" fill="#e9e9e9"/>
<g fill="#dadada"><rect x="70.500" y="27" width="1" height="60"/><rect x="164.500" y="27" width="1" height="60"/><rect x="234" y="27" width="1" height="60"/><rect x="442.500" y="27" width="1" height="60"/><rect x="596.500" y="27" width="1" height="60"/><rect x="839.500" y="27" width="1" height="60"/><rect x="906" y="27" width="1" height="60"/><rect x="972" y="27" width="1" height="60"/><rect x="1012" y="27" width="1" height="60"/><rect x="1061" y="27" width="1" height="60"/></g>
<!-- labels -->
<g class="r c"><text x="28" y="87">剪贴板</text><text x="117" y="87">幻灯片</text><text x="199" y="87">OfficePLUS</text><text x="332" y="87">字体</text><text x="513" y="87">段落</text><text x="712" y="87">绘图</text><text x="872" y="87">编辑</text><text x="939" y="87">Adobe Acro...</text><text x="992" y="87">加载项</text><text x="1037" y="87">保存</text></g>
<g class="ig"><path d="M63,82h4v4h-4zM65,84h4v3"/><path d="M435,82h4v4h-4zM437,84h4v3"/><path d="M590,82h4v4h-4zM592,84h4v3"/><path d="M831,82h4v4h-4zM833,84h4v3"/></g>
<path d="M1066,86l4,-4 4,4" fill="none" stroke="#666"/>
<!-- clipboard -->
<rect x="10" y="32" width="17" height="19" rx="1" fill="#d8d8d8"/><rect x="14" y="30" width="9" height="4" fill="#bdbdbd"/><rect x="20" y="40" width="10" height="12" fill="#eee" stroke="#c4c4c4"/>
<text x="19" y="60" class="r c" style="fill:#a9a9a9">粘贴</text><path d="M16,67l3,2 3,-2" class="ig"/>
<path d="M36,30l8,10M44,30l-8,10" stroke="#5f7f98" stroke-width="1.200"/><circle cx="37" cy="40" r="1.700" fill="none" stroke="#5f7f98"/><circle cx="44" cy="40" r="1.700" fill="none" stroke="#5f7f98"/>
<path d="M36,46h6v8h-6zM39,49h6v8h-6z" fill="#f3f3f3" stroke="#a0a0a0"/><path d="M54,49l2.500,2.500 2.500,-2.500" fill="none" stroke="#555"/>
<path d="M36,70l8,-6 2,2 -6,5z" fill="#d9a344"/><path d="M43,64l4,-3 2,2 -3,3z" fill="#6b6b6b"/>
<!-- new slide -->
<rect x="85.500" y="32.500" width="19" height="14" fill="#fff" stroke="#aaa"/><path d="M90,37h12M90,40h12M90,43h12" stroke="#b8b8b8"/><circle cx="88" cy="32" r="3" fill="#f1c469"/>
<text x="95" y="60" class="r c">新建</text><text x="95" y="71" class="r c">幻灯片 ˅</text>
<rect x="115.500" y="29.500" width="11" height="8" fill="#e8e8e8" stroke="#999"/><rect x="118" y="31" width="6" height="5" fill="#fff"/><text x="129" y="37" class="r">版式 ˅</text>
<rect x="115.500" y="46.500" width="11" height="8" fill="#fff" stroke="#999"/><path d="M116,47l3,-2 1,3" stroke="#2d7fb6" fill="none" stroke-width="1.200"/><text x="129" y="54" class="r">重置</text>
<rect x="117.500" y="63.500" width="9" height="8" fill="#fff" stroke="#999"/><rect x="116" y="62" width="6" height="3" fill="#e8a13c"/><text x="129" y="70" class="r">节 ˅</text>
<!-- OfficePLUS -->
<rect x="176.500" y="32.500" width="17" height="15" fill="#fff" stroke="#888"/><rect x="179.500" y="35.500" width="11" height="8" fill="#f6e6e2" stroke="#c0392b"/><path d="M185,35v8" stroke="#c0392b"/><path d="M195,36v13h-15" fill="none" stroke="#aaa"/>
<text x="185" y="60" class="r c">模板库</text>
<rect x="205.500" y="32.500" width="18" height="14" fill="#fff" stroke="#555"/><rect x="216" y="34" width="6" height="11" fill="#3f8fdc"/><path d="M214,33v13M206,39h8" stroke="#555"/>
<text x="215" y="60" class="r c">单页库</text>
<!-- font -->
<rect x="240.500" y="32" width="96" height="15.500" fill="#e7e7e7" stroke="#dcdcdc"/><rect x="336.500" y="32" width="8" height="15.500" fill="#ededed" stroke="#dcdcdc"/><path d="M339,40h3" stroke="#aaa"/>
<rect x="347" y="32" width="26" height="15.500" fill="#e7e7e7" stroke="#dcdcdc"/><rect x="373" y="32" width="9.500" height="15.500" fill="#ededed" stroke="#dcdcdc"/><path d="M376,40h3" stroke="#aaa"/>
<g font-size="9" fill="#adadad"><text x="388" y="43">A</text><text x="405" y="43">A</text><text x="246" y="65" font-weight="700">B</text><text x="263" y="65" font-style="italic">I</text><text x="279" y="65" text-decoration="underline">U</text><text x="296" y="65">S</text><text x="310" y="65" font-size="7">abc</text><text x="328" y="64" font-size="8">AV</text><text x="357" y="65">Aa</text><text x="415" y="65" font-size="10">A</text></g>
<path d="M343,60l2,2 2,-2M369,60l2,2 2,-2M402,60l2,2 2,-2M429,60l2,2 2,-2" class="ig"/>
<path d="M381.500,55v13" stroke="#ddd"/>
<text x="387" y="64" font-size="7" fill="#b0b0b0">ab</text><rect x="387" y="65" width="10" height="2" fill="#d8d8d8"/>
<path d="M426,35l6,0 4,6 -3,4 -4,-1z" fill="#d8d8d8"/>
<!-- paragraph -->
<g class="ig"><path d="M451,35h1M451,39h1M451,43h1M455,35h10M455,39h10M455,43h10M468,38l2,2 2,-2"/>
<path d="M479,35h1M479,39h1M479,43h1M483,35h10M483,39h10M483,43h10M495,38l2,2 2,-2"/>
<path d="M507,35h12M512,39h7M512,43h7M507,47h12M510,37l-3,2.500 3,2.500"/>
<path d="M524,35h12M524,39h7M524,43h7M524,47h12M533,37l3,2.500 -3,2.500"/>
<path d="M543,35v11M541,37l2,-2 2,2M541,44l2,2 2,-2M548,36h8M548,41h8M548,46h8M556,38l2,2 2,-2"/>
<path d="M456,58h10M456,61h10M456,64h10"/><path d="M473,58h10M475,61h6M473,64h10"/><path d="M491,58h10M495,61h6M491,64h10"/><path d="M508,58h11M508,61h11M508,64h11"/>
<path d="M540,57h10M540,60h10M540,63h10M540,66h10M553,60l2,2 2,-2"/>
<path d="M578,36l2,2 2,-2M578,50l2,2 2,-2M578,66l2,2 2,-2"/></g>
<rect x="524" y="57" width="11" height="9" fill="#d4d4d4"/>
<g class="ig"><path d="M568,30v11M572,30v11"/><path d="M568,46h9v9h-9z" stroke-dasharray="2 1"/><rect x="568" y="62" width="9" height="8"/></g>
<!-- shapes -->
<rect x="603" y="28" width="82" height="43" fill="#fdfdfd"/><rect x="685" y="28" width="17" height="43" fill="#f6f6f6" stroke="#e4e4e4" stroke-width=".5"/>
<path d="M691,47h6M691,49.500l3,2.500 3,-2.500" stroke="#555" fill="none"/>
<g class="ig"><rect x="605.500" y="32.500" width="10" height="8"/><rect x="619.500" y="32.500" width="10" height="8"/><path d="M632,32l11,10M645,32l11,10"/><rect x="659.500" y="32.500" width="10" height="8"/><ellipse cx="678" cy="36.500" rx="5" ry="4.500"/>
<rect x="605.500" y="46.500" width="10" height="8" rx="2"/><path d="M619,55l5,-9 5,9z"/><path d="M632,54h5v-8h6M646,46h5v8h6"/><path d="M660,47v7h5v2l5,-5.500 -5,-5.500v2z"/><path d="M675,46h6v4h2l-5,6 -5,-6h2z"/>
<path d="M605,60v8h10v-4l-4,-4z"/><path d="M623,59l4,3 -4,2 4,4"/><path d="M632,60q8,0 11,8"/><path d="M646,68q3,-10 6,-5t5,5"/><path d="M665,59q-3,0 -2,4t-1,2q2,0 1,3t2,2"/><path d="M677,59q3,0 2,4t1,2q-2,0 -1,3t-2,2"/></g>
<!-- arrange -->
<rect x="710" y="29" width="10" height="10" fill="#fff" stroke="#777"/><rect x="719" y="33" width="8" height="8" fill="#f0b63c"/><rect x="722" y="40" width="7" height="8" fill="#fff" stroke="#777"/>
<text x="719" y="60" class="r c">排列</text><path d="M716,67l3,2 3,-2" fill="none" stroke="#555"/>
<!-- quick styles -->
<path d="M744,31h14l6,4v13l-6,4h-14z" fill="#ededed" stroke="#cfcfcf"/><path d="M757,46l6,-5" stroke="#bbb" stroke-width="2.500"/>
<text x="753" y="60" class="r c" style="fill:#a9a9a9">快速样式</text><path d="M750,67l3,2 3,-2" class="ig"/>
<g class="ig"><path d="M775,33l5,-4 5,5 -5,4z"/><path d="M774,52l10,-7M774,52v-6h8"/><rect x="775" y="63" width="9" height="7" rx="2" fill="#e5e5e5"/></g>
<g class="r"><text x="786" y="37" style="fill:#a9a9a9">形状填充 ˅</text><text x="786" y="54" style="fill:#a9a9a9">形状轮廓 ˅</text><text x="786" y="70" style="fill:#a9a9a9">形状效果 ˅</text></g>
<!-- edit -->
<circle cx="855" cy="32" r="3.500" fill="none" stroke="#2f74b5" stroke-width="1.200"/><path d="M852.500,35l-3,3" stroke="#2f74b5" stroke-width="1.300"/><text x="861" y="37" class="r">查找</text>
<text x="848" y="49" font-size="5" fill="#2f74b5">ab</text><text x="851" y="55" font-size="5" fill="#777">ac</text><text x="861" y="54" class="r">替换</text><path d="M890,49l2.500,2.500 2.500,-2.500" fill="none" stroke="#555"/>
<path d="M851,62v11l2.500,-2.500 2,4 2,-1 -2,-4h3.500z" fill="#fff" stroke="#777"/><text x="861" y="70" class="r">选择 ˅</text>
<!-- adobe -->
<path d="M934,34h6l3,3v3M934,34v12h3" fill="none" stroke="#2f8fd8" stroke-width="1.200"/><path d="M937,46h9v-4M941.500,45v-7m-2,2l2,-2 2,2" fill="none" stroke="#2f8fd8" stroke-width="1.200"/>
<text x="939" y="60" class="r c">创建并共享</text><text x="939" y="71" class="r c">Adobe PDF</text>
<circle cx="992" cy="39" r="3.500" fill="#d0d0d0"/><text x="992" y="60" class="r c" style="fill:#aaa">加</text><text x="992" y="71" class="r c" style="fill:#aaa">载项</text>
<circle cx="1037" cy="36" r="3.500" fill="none" stroke="#2f8fd8" stroke-width="1.800"/><circle cx="1033" cy="41" r="3.500" fill="none" stroke="#e0453a" stroke-width="1.800"/><circle cx="1041" cy="41" r="3.500" fill="none" stroke="#2f8fd8" stroke-width="1.800"/>
<text x="1037" y="60" class="r c">保存到</text><text x="1037" y="71" class="r c">百度网盘</text>

<!-- STATUS -->
<rect y="538" width="1080" height="15" fill="#f1f1f1"/>
<rect y="553" width="1080" height="2" fill="url(#gr)"/>
<text x="6" y="550" class="s" textLength="99">幻灯片 第 38 张，共 41 张</text>
<path d="M120,542h5v8h-5zM125,543l5,-1v8l-5,1zM127,540l2,3" fill="none" stroke="#777" stroke-width=".8"/>
<text x="141" y="550" class="s">简体中文(中国大陆)</text>
<path d="M228,545a4,4 0 1 0 6,6M233,549l3,3 2,-4" fill="none" stroke="#666"/><circle cx="232" cy="542" r="1" fill="#666"/>
<text x="240" y="550" class="s">辅助功能: 一切就绪</text>
<rect x="848" y="538" width="28" height="15" fill="#cdcdcd"/>
<g fill="none" stroke="#777" stroke-width=".9"><rect x="829.500" y="541.500" width="9" height="9"/><path d="M832,543.500h4v3h-4M832,548h4"/>
<rect x="857" y="541.500" width="3.500" height="3"/><rect x="863" y="541.500" width="3.500" height="3"/><rect x="857" y="546.500" width="3.500" height="3"/><rect x="863" y="546.500" width="3.500" height="3"/>
<path d="M886,542.500l5,1v7l-5,-1zM891,543.500l5,-1v7l-5,1z"/>
<path d="M914,542.500h10M915,543v4h8v-4M919,547v3M916,550.500h6"/></g>
<path d="M937,546h5M946,546.500h70M1019,546h6M1022,543v6" stroke="#666" stroke-width=".9"/>
<rect x="969" y="542.500" width="3.500" height="8" fill="#444"/><rect x="981" y="544.500" width=".8" height="4" fill="#777"/>
<text x="1034" y="550" font-size="8.800" fill="#555">75%</text>
<path d="M1067,542h9v9h-9zM1067,542l3,3M1076,542l-3,3M1067,551l3,-3M1076,551l-3,-3" fill="none" stroke="#888" stroke-width=".8"/>
</svg>
</body></html>
